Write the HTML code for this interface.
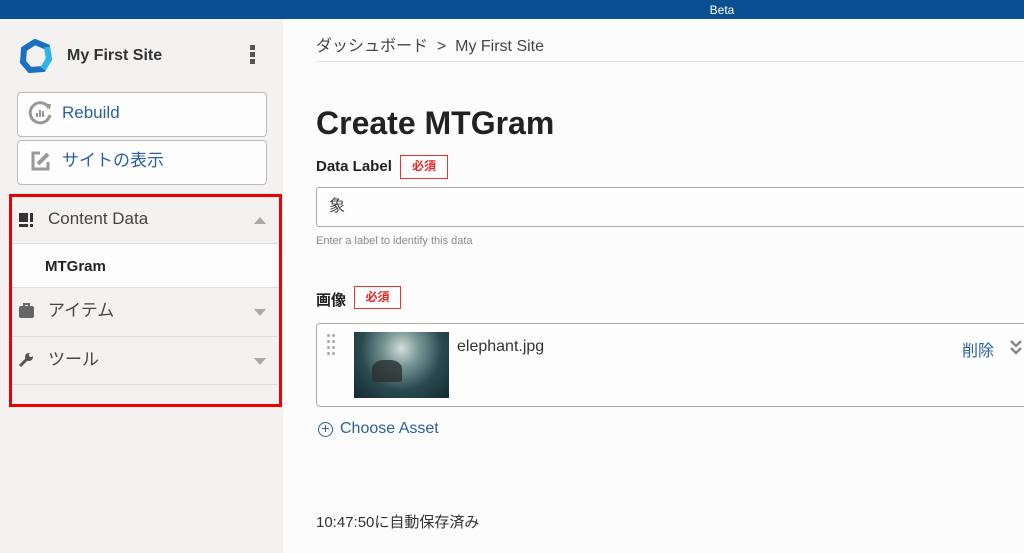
<!DOCTYPE html>
<html><head><meta charset="utf-8"><style>
*{box-sizing:border-box;margin:0;padding:0}
body{width:1024px;height:553px;overflow:hidden;background:#fcfcfc;font-family:"Liberation Sans","Noto Sans CJK JP",sans-serif;color:#333;position:relative}
.a{position:absolute}
.top{left:0;top:0;width:1024px;height:19px;background:#0b4f93;color:#fff;font-size:12px;text-align:center;line-height:20px;padding-left:420px}
.side{left:0;top:19px;width:283px;height:534px;background:#f3f2f1}
.btn{left:17px;width:250px;height:45px;border:1px solid #bbb;border-radius:4px;background:#fdfdfd;color:#2b5f9e;font-size:17px;line-height:40px;padding-left:44px}
.row{left:12px;width:266px;border-bottom:1px solid #ddd;font-size:17px;color:#444;padding-left:36px}
.tri{position:absolute;right:12px;width:0;height:0;border-left:6px solid transparent;border-right:6px solid transparent}
.badge{border:1px solid #e33;color:#e22;font-size:12px;font-weight:bold;text-align:center;line-height:21px;background:#fff}
</style></head><body>
<div class="a top">Beta</div>
<div class="a side"></div>
<svg class="a" style="left:18px;top:39px" width="35" height="35" viewBox="0 0 35 35">
<path d="M17 3 L29 8 L31 20 L25 30 L12 31 L5 23 L6 10 Z" fill="none" stroke="#1a6fc0" stroke-width="6"/>
<path d="M29 8 L31 20 L25 30" fill="none" stroke="#2ab6ea" stroke-width="6"/>
</svg>
<div class="a" style="left:67px;top:47px;font-size:16px;font-weight:bold;color:#333">My First Site</div>
<div class="a" style="left:250px;top:45px;width:5px;height:5px;background:#555;box-shadow:0 7px 0 #555,0 14px 0 #555"></div>
<div class="a btn" style="top:92px">Rebuild</div>
<svg class="a" style="left:28px;top:100px" width="25" height="25" viewBox="0 0 25 25"><path d="M21 8 A10 10 0 1 0 22 15" fill="none" stroke="#999" stroke-width="3"/><path d="M17 4 L23 4 L22 10Z" fill="#999"/><rect x="8" y="13" width="2" height="4" fill="#999"/><rect x="11" y="10" width="2" height="7" fill="#999"/><rect x="14" y="11" width="2" height="6" fill="#999"/></svg>
<div class="a btn" style="top:140px">サイトの表示</div>
<svg class="a" style="left:30px;top:150px" width="22" height="22" viewBox="0 0 22 22"><path d="M10 3 H3 V19 H18 V12" fill="none" stroke="#999" stroke-width="3"/><path d="M8 14 L18 4" stroke="#999" stroke-width="4"/></svg>
<div class="a row" style="top:197px;height:47px;line-height:44px;">Content Data<div class="tri" style="top:20px;border-bottom:7px solid #aaa"></div></div>
<div class="a" style="left:19px;top:213px;width:14px;height:14px;background:linear-gradient(#f3f2f1,#f3f2f1) 9px 0/2px 14px no-repeat,linear-gradient(#f3f2f1,#f3f2f1) 0 9px/14px 2px no-repeat,#333"></div>
<div class="a row" style="top:244px;height:44px;line-height:46px;background:#fdfdfd;font-weight:bold;font-size:15px;color:#222;padding-left:33px">MTGram</div>
<div class="a row" style="top:288px;height:49px;line-height:46px">アイテム<div class="tri" style="top:21px;border-top:7px solid #aaa"></div></div>
<div class="a" style="left:19px;top:306px;width:15px;height:12px;background:#666;border-radius:2px"></div>
<div class="a" style="left:23px;top:303px;width:7px;height:4px;border:2px solid #666;border-bottom:none"></div>
<div class="a row" style="top:337px;height:48px;line-height:46px">ツール<div class="tri" style="top:21px;border-top:7px solid #aaa"></div></div>
<svg class="a" style="left:18px;top:352px" width="16" height="16" viewBox="0 0 16 16"><path d="M2 14 L9 7" stroke="#555" stroke-width="3"/><circle cx="11" cy="5" r="4" fill="#555"/><circle cx="13" cy="3" r="2" fill="#f3f2f1"/></svg>
<div class="a" style="left:9px;top:194px;width:273px;height:213px;border:3px solid #e00"></div>

<div class="a" style="left:316px;top:32px;font-size:16px;color:#444">ダッシュボード &nbsp;&gt;&nbsp; My First Site</div>
<div class="a" style="left:316px;top:61px;width:708px;height:1px;background:#e3e3e3"></div>
<div class="a" style="left:316px;top:105px;font-size:32px;font-weight:bold;color:#222">Create MTGram</div>
<div class="a" style="left:316px;top:158px;font-size:15px;font-weight:bold;color:#222">Data Label</div>
<div class="a badge" style="left:400px;top:155px;width:48px;height:24px">必須</div>
<div class="a" style="left:316px;top:187px;width:720px;height:40px;border:1px solid #aaa;border-radius:3px;background:#fdfdfd;font-size:16px;line-height:38px;padding-left:12px;color:#444">象</div>
<div class="a" style="left:316px;top:235px;font-size:11px;color:#888">Enter a label to identify this data</div>
<div class="a" style="left:316px;top:289px;font-size:15px;font-weight:bold;color:#222">画像</div>
<div class="a badge" style="left:354px;top:286px;width:47px;height:23px">必須</div>
<div class="a" style="left:316px;top:323px;width:720px;height:84px;border:1px solid #aaa;border-radius:4px;background:#fdfdfd"></div>
<div class="a" style="left:327px;top:334px;width:3px;height:3px;border-radius:50%;background:#aaa;box-shadow:5px 0 #aaa,0 6px #aaa,5px 6px #aaa,0 12px #aaa,5px 12px #aaa,0 18px #aaa,5px 18px #aaa"></div>
<div class="a" style="left:354px;top:332px;width:95px;height:66px;background:radial-gradient(ellipse at 50% 25%,#d8dcd8 0%,#7a9a98 25%,#2a4a50 60%,#132a30 100%)"></div>
<div class="a" style="left:372px;top:360px;width:30px;height:22px;background:#2a3030;border-radius:40% 40% 10% 10%;opacity:.8"></div>
<div class="a" style="left:457px;top:338px;font-size:16px;color:#333">elephant.jpg</div>
<div class="a" style="left:962px;top:337px;font-size:16px;color:#2b5f9e">削除</div>
<svg class="a" style="left:1009px;top:338px" width="15" height="18" viewBox="0 0 15 18"><path d="M2 3 L7 8 L12 3 M2 10 L7 15 L12 10" fill="none" stroke="#888" stroke-width="2.5"/></svg>
<div class="a" style="left:318px;top:422px;width:15px;height:15px;border:1.5px solid #2b5f9e;border-radius:50%;color:#2b5f9e;font-size:14px;line-height:11px;text-align:center">+</div>
<div class="a" style="left:340px;top:420px;font-size:16px;color:#2b5f9e">Choose Asset</div>
<div class="a" style="left:316px;top:511px;font-size:15px;color:#333">10:47:50に自動保存済み</div>
</body></html>
